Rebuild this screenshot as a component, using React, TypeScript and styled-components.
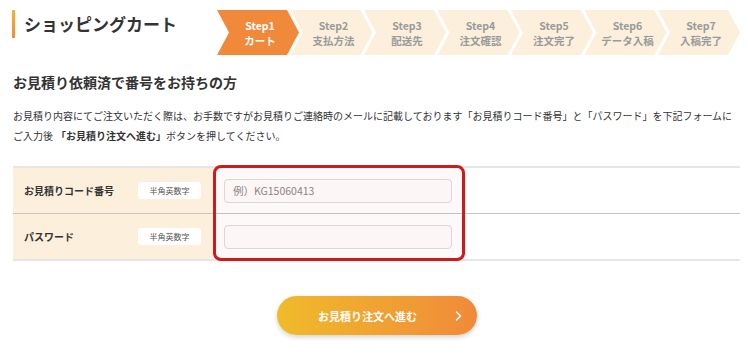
import React from 'react';
import styled, { createGlobalStyle } from 'styled-components';

const GlobalStyle = createGlobalStyle`
  body {
    margin: 0;
    background: #fff;
    color: #333;
    font-family: "Noto Sans CJK JP", "Noto Sans", sans-serif;
  }
`;

const steps = [
  { no: 'Step1', label: 'カート' },
  { no: 'Step2', label: '支払方法' },
  { no: 'Step3', label: '配送先' },
  { no: 'Step4', label: '注文確認' },
  { no: 'Step5', label: '注文完了' },
  { no: 'Step6', label: 'データ入稿' },
  { no: 'Step7', label: '入稿完了' },
];

const Page = styled.div`
  padding: 10px 8px 20px 13px;
`;

const Header = styled.header`
  display: flex;
  align-items: flex-start;
  justify-content: space-between;
  margin-left: -1px;
`;

const Title = styled.h1`
  margin: 0;
  height: 28px;
  padding-left: 9px;
  border-left: 3px solid;
  border-image: linear-gradient(to bottom, #f6b42c, #f08a3a) 1;
  font-size: 17px;
  line-height: 28px;
  font-weight: 700;
  color: #333;
`;

const StepList = styled.ol`
  display: flex;
  margin: 0;
  padding: 0;
  list-style: none;
`;

const Step = styled.li<{ $active?: boolean }>`
  width: 82px;
  height: 45px;
  flex-shrink: 0;
  margin-left: -8.5px;
  display: flex;
  flex-direction: column;
  align-items: center;
  justify-content: center;
  padding-left: 4px;
  box-sizing: border-box;
  clip-path: polygon(0 0, calc(100% - 12px) 0, 100% 50%, calc(100% - 12px) 100%, 0 100%, 12px 50%);
  background: ${(p) => (p.$active ? '#f08a3a' : '#fcefdc')};
  color: ${(p) => (p.$active ? '#fff' : '#9a9a9a')};
  font-size: 10.5px;
  font-weight: 700;
  line-height: 15px;

  &:first-child {
    margin-left: 0;
  }
`;

const Heading = styled.h2`
  margin: 16px 0 0;
  font-size: 14px;
  line-height: 22px;
  font-weight: 700;
  color: #333;
`;

const Lead = styled.p`
  margin: 13px 0 0;
  font-size: 10px;
  line-height: 20px;
  color: #333;

  strong {
    font-weight: 700;
    margin-left: 3px;
  }
`;

const FormTable = styled.div`
  position: relative;
  margin-top: 20px;
  border-top: 2px solid #e6e6e6;
  border-bottom: 2px solid #e6e6e6;
`;

const Row = styled.div`
  display: grid;
  grid-template-columns: 200px 1fr;
  height: 45px;

  & + & {
    border-top: 1px solid #c4c4c4;
  }
`;

const LabelCell = styled.div`
  display: flex;
  align-items: center;
  justify-content: space-between;
  padding: 0 12px 0 11px;
  background: #fcefdc;
  font-size: 10px;
  font-weight: 700;
  color: #333;
`;

const Badge = styled.span`
  display: inline-flex;
  align-items: center;
  justify-content: center;
  width: 63px;
  height: 17px;
  border-radius: 3px;
  background: #fff;
  font-size: 8px;
  font-weight: 400;
  color: #555;
`;

const ValueCell = styled.div`
  display: flex;
  align-items: center;
  padding-left: 11px;
`;

const TextInput = styled.input`
  width: 228px;
  height: 24px;
  box-sizing: border-box;
  padding: 0 8px;
  border: 1px solid #dcdcdc;
  border-radius: 4px;
  background: #fefcfc;
  font-family: inherit;
  font-size: 10.5px;
  color: #333;
  outline: none;

  &::placeholder {
    color: #888;
  }
`;

const Highlight = styled.div`
  position: absolute;
  left: 200px;
  top: -3px;
  width: 252px;
  height: 96px;
  box-sizing: border-box;
  border: 3px solid #d0191b;
  border-radius: 8px;
  background: rgba(220, 60, 60, 0.03);
  pointer-events: none;
`;

const Actions = styled.div`
  display: flex;
  justify-content: center;
  margin-top: 35px;
`;

const SubmitButton = styled.button`
  position: relative;
  width: 200px;
  height: 39px;
  padding: 0 18px 0 0;
  border: none;
  border-radius: 20px;
  background: linear-gradient(to right, #f0bb2a, #f08a3a);
  box-shadow: 0 2px 5px rgba(0, 0, 0, 0.18);
  color: #fff;
  font-family: inherit;
  font-size: 11px;
  font-weight: 700;
  cursor: pointer;

  svg {
    position: absolute;
    right: 15px;
    top: 50%;
    transform: translateY(-50%);
  }
`;

export default function App() {
  return (
    <>
      <GlobalStyle />
      <Page>
        <Header>
          <Title>ショッピングカート</Title>
          <StepList>
            {steps.map((s, i) => (
              <Step key={s.no} $active={i === 0}>
                <span>{s.no}</span>
                <span>{s.label}</span>
              </Step>
            ))}
          </StepList>
        </Header>

        <Heading>お見積り依頼済で番号をお持ちの方</Heading>
        <Lead>
          お見積り内容にてご注文いただく際は、お手数ですがお見積りご連絡時のメールに記載しております「お見積りコード番号」と「パスワード」を下記フォームに
          <br />
          ご入力後<strong>「お見積り注文へ進む」</strong>ボタンを押してください。
        </Lead>

        <FormTable>
          <Row>
            <LabelCell>
              お見積りコード番号
              <Badge>半角英数字</Badge>
            </LabelCell>
            <ValueCell>
              <TextInput type="text" placeholder="例）KG15060413" />
            </ValueCell>
          </Row>
          <Row>
            <LabelCell>
              パスワード
              <Badge>半角英数字</Badge>
            </LabelCell>
            <ValueCell>
              <TextInput type="password" />
            </ValueCell>
          </Row>
          <Highlight />
        </FormTable>

        <Actions>
          <SubmitButton type="button">
            お見積り注文へ進む
            <svg width="7" height="11" viewBox="0 0 7 11" fill="none">
              <path d="M1.5 1.5 L5.5 5.5 L1.5 9.5" stroke="#fff" strokeWidth="1.6" strokeLinecap="round" strokeLinejoin="round" />
            </svg>
          </SubmitButton>
        </Actions>
      </Page>
    </>
  );
}
